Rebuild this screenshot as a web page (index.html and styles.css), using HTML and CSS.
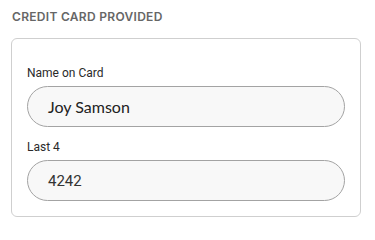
FILE: index.html
```html
<!DOCTYPE html>
<html>
<head>
<meta charset="utf-8">
<link rel="stylesheet" href="styles.css">
</head>
<body>
<section class="section">
  <h2 class="title">CREDIT CARD PROVIDED</h2>
  <div class="card">
    <div class="field">
      <label class="label">Name on Card</label>
      <div class="input name">Joy Samson</div>
    </div>
    <div class="field">
      <label class="label">Last 4</label>
      <div class="input digits">4242</div>
    </div>
  </div>
</section>
</body>
</html>
```
FILE: styles.css
```css
html, body {
  margin: 0;
  padding: 0;
  background: #ffffff;
}
body {
  font-family: Roboto, "Liberation Sans", sans-serif;
  color: #222;
}
.section {
  padding: 9px 14px 0 11px;
}
.title {
  margin: 0 0 0 1px;
  font-family: Inter, Roboto, sans-serif;
  font-size: 12px;
  line-height: 16px;
  font-weight: 600;
  color: #666;
  letter-spacing: 0.3px;
}
.card {
  margin-top: 13px;
  border: 1px solid #cfcfcf;
  border-radius: 6px;
  padding: 27px 15px 15px;
  display: flex;
  flex-direction: column;
  gap: 13px;
}
.field {
  display: flex;
  flex-direction: column;
  gap: 6px;
}
.label {
  font-size: 12px;
  line-height: 14px;
  color: #2a2a2a;
}
.input {
  height: 39px;
  border: 1px solid #a3a3a3;
  border-radius: 21px;
  background: #f8f8f8;
  padding: 0 20px;
  display: flex;
  align-items: center;
  color: #222;
}
.name {
  font-family: Lato, Roboto, sans-serif;
  font-size: 16px;
}
.digits {
  font-size: 15px;
  color: #333;
}
```
